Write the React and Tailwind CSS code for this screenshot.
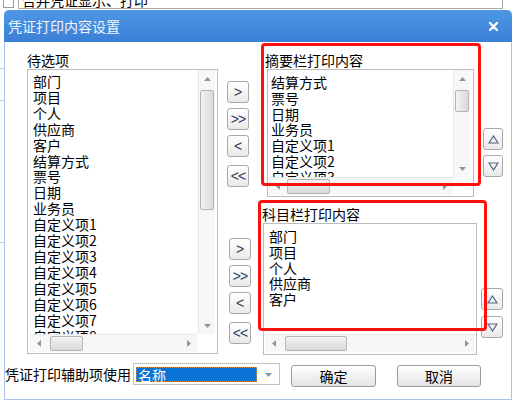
const leftItems = [
  '部门', '项目', '个人', '供应商', '客户', '结算方式', '票号', '日期', '业务员',
  '自定义项1', '自定义项2', '自定义项3', '自定义项4', '自定义项5', '自定义项6', '自定义项7', '自定义项8',
];
const summaryItems = ['结算方式', '票号', '日期', '业务员', '自定义项1', '自定义项2', '自定义项3'];
const subjectItems = ['部门', '项目', '个人', '供应商', '客户'];

function Tri({ dir }) {
  const vertical = dir === 'up' || dir === 'down';
  const pts = {
    up: '0,4 3.5,0 7,4',
    down: '0,0 7,0 3.5,4',
    left: '4,0 4,7 0,3.5',
    right: '0,0 0,7 4,3.5',
  }[dir];
  return (
    <svg width={vertical ? 7 : 4} height={vertical ? 4 : 7} viewBox={vertical ? '0 0 7 4' : '0 0 4 7'}>
      <polygon points={pts} fill="#8a96a3" />
    </svg>
  );
}

function VScroll({ thumbClass }) {
  return (
    <div className="flex w-[17px] flex-col border-l border-[#e8e8e8] bg-[#f7f7f7]">
      <div className="flex h-[17px] items-center justify-center">
        <Tri dir="up" />
      </div>
      <div className="flex min-h-0 flex-1 flex-col px-[1px]">
        <div className={`rounded-[2px] border border-[#b4b4b4] bg-linear-to-r from-[#f3f3f3] to-[#d9d9d9] ${thumbClass}`} />
      </div>
      <div className="flex h-[17px] items-center justify-center">
        <Tri dir="down" />
      </div>
    </div>
  );
}

function HScroll({ thumbClass }) {
  return (
    <div className="flex h-[18px] flex-1 border-t border-[#e8e8e8] bg-[#f7f7f7]">
      <div className="flex w-[17px] items-center justify-center">
        <Tri dir="left" />
      </div>
      <div className="flex min-w-0 flex-1 py-[1px]">
        <div className={`rounded-[2px] border border-[#b4b4b4] bg-linear-to-b from-[#f3f3f3] to-[#d9d9d9] ${thumbClass}`} />
      </div>
      <div className="flex w-[17px] items-center justify-center">
        <Tri dir="right" />
      </div>
    </div>
  );
}

function Items({ items, className }) {
  return (
    <div className={`min-w-0 flex-1 overflow-hidden whitespace-nowrap text-[14px] leading-[15.8px] text-black ${className}`}>
      {items.map((it) => (
        <div key={it}>{it}</div>
      ))}
    </div>
  );
}

function SmallButton({ children, className = '' }) {
  return (
    <div
      className={`flex h-[22px] w-[22px] items-center justify-center rounded-[3px] border border-[#a9a9a9] bg-linear-to-b from-white to-[#e9e9e9] font-['Liberation_Sans',sans-serif] text-[14px] leading-none text-[#2a3f62] ${className}`}
    >
      {children}
    </div>
  );
}

function MoveButtons({ className = '' }) {
  return (
    <div className={`flex flex-col ${className}`}>
      <SmallButton>&gt;</SmallButton>
      <SmallButton className="mt-[5px] tracking-[-1px]">&gt;&gt;</SmallButton>
      <SmallButton className="mt-[5px]">&lt;</SmallButton>
      <SmallButton className="mt-[8px] tracking-[-1px]">&lt;&lt;</SmallButton>
    </div>
  );
}

function OrderButton({ up, className = '' }) {
  return (
    <div
      className={`flex h-[22px] items-center justify-center rounded-[3px] border border-[#a9a9a9] bg-linear-to-b from-white to-[#e9e9e9] ${className}`}
    >
      <svg width="11" height="9" viewBox="0 0 11 9">
        <polygon
          points={up ? '5.5,1 10,8 1,8' : '1,1 10,1 5.5,8'}
          fill="none"
          stroke="#4d6687"
          strokeWidth="1.2"
        />
      </svg>
    </div>
  );
}

function PushButton({ children, className = '' }) {
  return (
    <div
      className={`flex h-[22px] items-center justify-center rounded-[3px] border border-[#9c9c9c] bg-linear-to-b from-white to-[#e4e4e4] text-[14px] text-black ${className}`}
    >
      {children}
    </div>
  );
}

export default function App() {
  return (
    <div className="h-[400px] w-[514px] overflow-hidden bg-white font-['Noto_Sans_CJK_SC','Liberation_Sans',sans-serif]">
      {/* window behind the dialog */}
      <div className="flex h-[10px] overflow-hidden">
        <div className="ml-[3px] h-[8px] w-[11px] border-x border-b border-[#9a9a9a]" />
        <div className="ml-[4px] h-[9px] w-[485px] overflow-hidden border-x border-b border-[#a8a8a8]">
          <div className="-mt-[9px] pl-[3px] text-[14px] leading-[18px] text-black">合并凭证显示、打印</div>
        </div>
      </div>

      <div className="flex">
        <div className="flex w-[4px] flex-col">
          <div className="mt-[58px] h-px bg-[#c8c8c8]" />
          <div className="mt-[31px] h-px bg-[#c8c8c8]" />
          <div className="mt-[141px] h-px bg-[#c8c8c8]" />
        </div>

        <div className="relative flex h-[390px] w-[508px] flex-col">
          {/* title bar */}
          <div className="flex h-[32px] items-center justify-between rounded-t-[5px] bg-linear-to-b from-[#4f97e6] to-[#3a7fd6] pl-[4px] pr-[14px]">
            <span className="text-[14px] leading-none text-[#f0f5fc]">凭证打印内容设置</span>
            <svg width="9" height="9" viewBox="0 0 9 9">
              <path d="M1 1 L8 8 M8 1 L1 8" stroke="white" strokeWidth="2.4" strokeLinecap="round" />
            </svg>
          </div>

          {/* body */}
          <div className="flex flex-1 flex-col border-x border-b border-[#a9c4ea] bg-white">
            <div className="flex pl-[22px] pt-[9px]">
              {/* available items */}
              <div className="flex w-[191px] flex-col">
                <div className="text-[14px] leading-[18px] text-black">待选项</div>
                <div className="flex h-[285px] flex-col border border-[#bcbcbc] pb-[1px]">
                  <div className="flex min-h-0 flex-1">
                    <Items items={leftItems} className="pl-[5px] pt-[4px] leading-[15.9px]" />
                    <VScroll thumbClass="mt-[3px] h-[120px]" />
                    <div className="w-[2px]" />
                  </div>
                  <div className="flex pl-[2px]">
                    <HScroll thumbClass="ml-[3px] w-[33px]" />
                    <div className="w-[20px]" />
                  </div>
                </div>
              </div>

              {/* move buttons */}
              <div className="ml-[9px] flex w-[22px] flex-col pt-[30px]">
                <MoveButtons />
                <MoveButtons className="ml-[2px] mt-[51px]" />
              </div>

              {/* targets */}
              <div className="ml-[9px] flex w-[222px] flex-col">
                <div className="ml-[7px] text-[14px] leading-[18px] text-black">摘要栏打印内容</div>
                <div className="ml-[9px] flex h-[128px] w-[207px] flex-col border border-[#bcbcbc] pb-[1px]">
                  <div className="flex min-h-0 flex-1">
                    <Items items={summaryItems} className="pl-[3px] pt-[5px]" />
                    <VScroll thumbClass="mt-[3px] h-[22px]" />
                    <div className="w-[3px]" />
                  </div>
                  <div className="flex pl-[1px]">
                    <HScroll thumbClass="ml-[1px] w-[43px]" />
                    <div className="w-[20px]" />
                  </div>
                </div>

                <div className="ml-[4px] mt-[8px] text-[14px] leading-[18px] text-black">科目栏打印内容</div>
                <div className="ml-[5px] flex h-[132px] w-[214px] flex-col border border-[#bcbcbc] pb-[1px]">
                  <div className="flex min-h-0 flex-1">
                    <Items items={subjectItems} className="pl-[5px] pt-[5px]" />
                  </div>
                  <div className="flex h-[19px] px-[1px]">
                    <HScroll thumbClass="ml-[3px] w-[62px]" />
                  </div>
                </div>
              </div>

              {/* order buttons */}
              <div className="flex w-[24px] flex-col">
                <OrderButton up className="ml-[3px] mt-[77px] w-[20px]" />
                <OrderButton className="ml-[3px] mt-[5px] w-[20px]" />
                <OrderButton up className="ml-[1px] mt-[111px] w-[22px]" />
                <OrderButton className="ml-[1px] mt-[6px] w-[22px]" />
              </div>
            </div>

            {/* bottom row */}
            <div className="mt-[8px] flex items-start">
              <div className="w-[128px] whitespace-nowrap text-[14px] leading-[22px] text-black">凭证打印辅助项使用</div>
              <div className="flex h-[22px] w-[147px] border border-[#c4c4c4] bg-white">
                <div className="ml-[2px] mt-[3px] flex h-[15px] w-[121px] items-center border border-dotted border-[#d9903a] bg-[#0a74d6] pl-[1px] text-[14px] leading-none text-white">
                  名称
                </div>
                <div className="flex flex-1 items-center justify-center pt-[1px]">
                  <Tri dir="down" />
                </div>
              </div>
              <PushButton className="ml-[11px] mt-[2px] w-[85px]">确定</PushButton>
              <PushButton className="ml-[21px] mt-[2px] w-[84px]">取消</PushButton>
            </div>
          </div>

          {/* red annotation boxes */}
          <div className="pointer-events-none absolute left-[257px] top-[33px] h-[143px] w-[220px] rounded-[4px] border-[3px] border-[#ff1010]" />
          <div className="pointer-events-none absolute left-[254px] top-[190px] h-[131px] w-[229px] rounded-[4px] border-[3px] border-[#ff1010]" />
        </div>
      </div>
    </div>
  );
}
